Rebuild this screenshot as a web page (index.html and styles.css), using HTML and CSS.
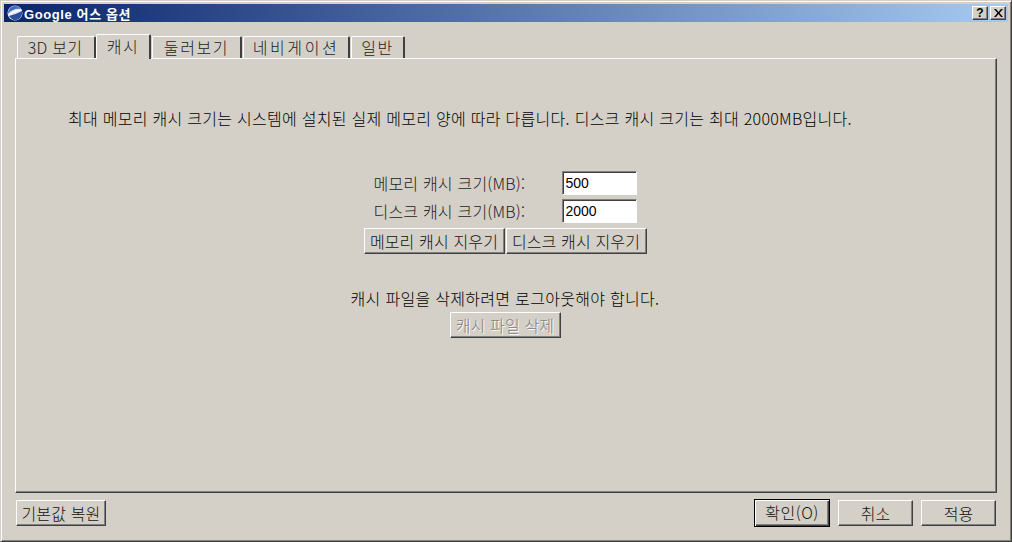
FILE: index.html
```html
<!DOCTYPE html>
<html lang="ko">
<head>
  <meta charset="UTF-8" />
  <title>Google 어스 옵션</title>
  <link rel="stylesheet" href="styles.css">
</head>
<body>
  <div class="window">
    <div class="titlebar">
      <svg class="app-icon" width="16" height="16" viewBox="0 0 16 16">
        <circle cx="8" cy="8" r="7.5" fill="#dfe6f2"/>
        <path d="M1 9c3-4 8-6 13-5-1-1.500-3-3-6-3C4 1 1 4.500 1 9z" fill="#3d6fc0"/>
        <path d="M2 11c4-1 9-3 13-5 .5 3-.5 6-3 8-3 2-7 1.500-10-3z" fill="#2b4f9e"/>
        <path d="M1.500 9.500c4-2.500 8-4 13-4.500" fill="none" stroke="#fff" stroke-width="1.300"/>
      </svg>
      <span class="title-text">Google 어스 옵션</span>
      <div class="title-buttons">
        <button class="cap-btn help">?</button>
        <button class="cap-btn close">
          <svg width="9" height="8" viewBox="0 0 9 8"><path d="M0 0h2l2.500 3L7 0h2L5.500 4 9 8H7L4.500 5 2 8H0l3.500-4z" fill="#000"/></svg>
        </button>
      </div>
    </div>

    <div class="tabs">
      <div class="tab tab-3d">3D 보기</div>
      <div class="tab tab-cache active">캐시</div>
      <div class="tab tab-tour">둘러보기</div>
      <div class="tab tab-nav">네비게이션</div>
      <div class="tab tab-general">일반</div>
    </div>

    <div class="panel">
      <p class="intro">최대 메모리 캐시 크기는 시스템에 설치된 실제 메모리 양에 따라 다릅니다. 디스크 캐시 크기는 최대 2000MB입니다.</p>

      <div class="centered">
        <div class="size-row">
          <label class="size-label">메모리 캐시 크기(MB):</label>
          <input class="size-input" type="text" value="500" />
        </div>
        <div class="size-row">
          <label class="size-label">디스크 캐시 크기(MB):</label>
          <input class="size-input" type="text" value="2000" />
        </div>
        <div class="clear-row">
          <button class="btn clear-btn">메모리 캐시 지우기</button>
          <button class="btn clear-btn">디스크 캐시 지우기</button>
        </div>

        <p class="logout-note">캐시 파일을 삭제하려면 로그아웃해야 합니다.</p>
        <button class="btn delete-btn" disabled>캐시 파일 삭제</button>
      </div>
    </div>

    <div class="footer">
      <button class="btn restore-btn">기본값 복원</button>
      <div class="footer-right">
        <button class="btn default-btn">확인(O)</button>
        <button class="btn foot-btn">취소</button>
        <button class="btn foot-btn">적용</button>
      </div>
    </div>
  </div>
</body>
</html>
```

FILE: styles.css
```css
* {
  box-sizing: border-box;
}
html, body {
  margin: 0;
  padding: 0;
}
body {
  width: 1012px;
  height: 542px;
  overflow: hidden;
  background: #d4d0c8;
  font-family: "Noto Sans CJK KR", "Liberation Sans", sans-serif;
  font-size: 16px;
  font-weight: 300;
  color: #000;
}
.window {
  width: 1012px;
  height: 542px;
  padding: 3px;
  background: #d4d0c8;
  border: 1px solid;
  border-color: #d4d0c8 #404040 #404040 #d4d0c8;
  box-shadow: inset 1px 1px 0 #fff, inset -1px -1px 0 #808080;
  display: flex;
  flex-direction: column;
}

/* title bar */
.titlebar {
  height: 18px;
  background: linear-gradient(to right, #0a246a, #a6caf0);
  display: flex;
  align-items: center;
  padding: 0 2px 0 3px;
  color: #fff;
  font-family: "Liberation Sans", "Noto Sans CJK KR", sans-serif;
  font-weight: bold;
  font-size: 13px;
  letter-spacing: 0.6px;
  flex: none;
}
.app-icon {
  flex: none;
  margin-right: 1px;
}
.title-buttons {
  margin-left: auto;
  display: flex;
  gap: 2px;
}
.cap-btn {
  width: 16px;
  height: 14px;
  padding: 0;
  background: #d4d0c8;
  border: 1px solid;
  border-color: #fff #404040 #404040 #fff;
  box-shadow: inset -1px -1px 0 #808080;
  font-family: "Liberation Sans", sans-serif;
  font-weight: bold;
  font-size: 12px;
  line-height: 11px;
  color: #000;
  display: flex;
  align-items: center;
  justify-content: center;
}

/* tabs */
.tabs {
  display: flex;
  align-items: flex-end;
  height: 36px;
  padding-left: 13px;
  flex: none;
  position: relative;
  z-index: 1;
}
.tab {
  height: 22px;
  margin-right: 1px;
  background: #d4d0c8;
  border-top: 1px solid #fff;
  border-left: 1px solid #fff;
  border-right: 2px solid #404040;
  border-top-left-radius: 2px;
  border-top-right-radius: 2px;
  text-align: center;
  line-height: 20px;
  color: #222;
}
.tab-3d { width: 79px; padding-right: 2px; letter-spacing: 0.3px; }
.tab-cache { width: 55px; letter-spacing: 1.5px; }
.tab-tour { width: 90px; letter-spacing: 1.6px; }
.tab-nav { width: 107px; letter-spacing: 2.6px; }
.tab-general { width: 54px; letter-spacing: 1.5px; }
.tab.active {
  height: 25px;
  margin-bottom: -1px;
  margin-left: -1px;
  line-height: 22px;
}

/* panel */
.panel {
  width: 982px;
  height: 435px;
  margin-left: 11px;
  background: #d4d0c8;
  border: 1px solid;
  border-color: #fff #404040 #404040 #fff;
  box-shadow: inset -1px -1px 0 #808080;
  flex: none;
}
.intro {
  margin: 49px 0 0;
  height: 20px;
  padding-left: 52px;
  line-height: 20px;
  letter-spacing: 0.28px;
  white-space: nowrap;
}
.centered {
  display: flex;
  flex-direction: column;
  align-items: center;
  margin: 43px 2px 0 0;
}
.size-row {
  display: flex;
  align-items: center;
  height: 24px;
  margin-bottom: 4px;
}
.size-label {
  width: 188px;
  letter-spacing: 0.2px;
  color: #222;
}
.size-input {
  width: 75px;
  height: 24px;
  padding: 0 3px;
  background: #fff;
  border: 1px solid;
  border-color: #808080 #fff #fff #808080;
  box-shadow: inset 1px 1px 0 #404040;
  font-family: "Liberation Sans", sans-serif;
  font-size: 14px;
  color: #000;
  outline: none;
}
.btn {
  background: #d4d0c8;
  border: 1px solid;
  border-color: #fff #404040 #404040 #fff;
  box-shadow: inset -1px -1px 0 #808080;
  font-family: "Noto Sans CJK KR", "Liberation Sans", sans-serif;
  font-size: 16px;
  font-weight: 300;
  letter-spacing: 0.15px;
  color: #111;
  padding: 0 0 2px;
  white-space: nowrap;
}
.clear-row {
  display: flex;
  gap: 1px;
  margin-top: 1px;
}
.clear-btn {
  width: 141px;
  height: 26px;
}
.logout-note {
  margin: 34px 0 0;
  height: 20px;
  line-height: 20px;
  letter-spacing: 0.3px;
}
.delete-btn {
  width: 111px;
  height: 26px;
  margin-top: 4px;
  color: #808080;
  text-shadow: 1px 1px 0 #fff;
}

/* footer buttons */
.footer {
  display: flex;
  justify-content: space-between;
  align-items: center;
  margin: 6px 12px 0 12px;
  height: 28px;
}
.footer-right {
  display: flex;
  align-items: center;
  gap: 8px;
}
.restore-btn {
  width: 90px;
  height: 26px;
}
.foot-btn {
  width: 75px;
  height: 26px;
}
.default-btn {
  width: 76px;
  height: 28px;
  border: 1px solid #000;
  letter-spacing: 0.5px;
  box-shadow: inset 1px 1px 0 #fff, inset -1px -1px 0 #404040, inset -2px -2px 0 #808080;
}
```
